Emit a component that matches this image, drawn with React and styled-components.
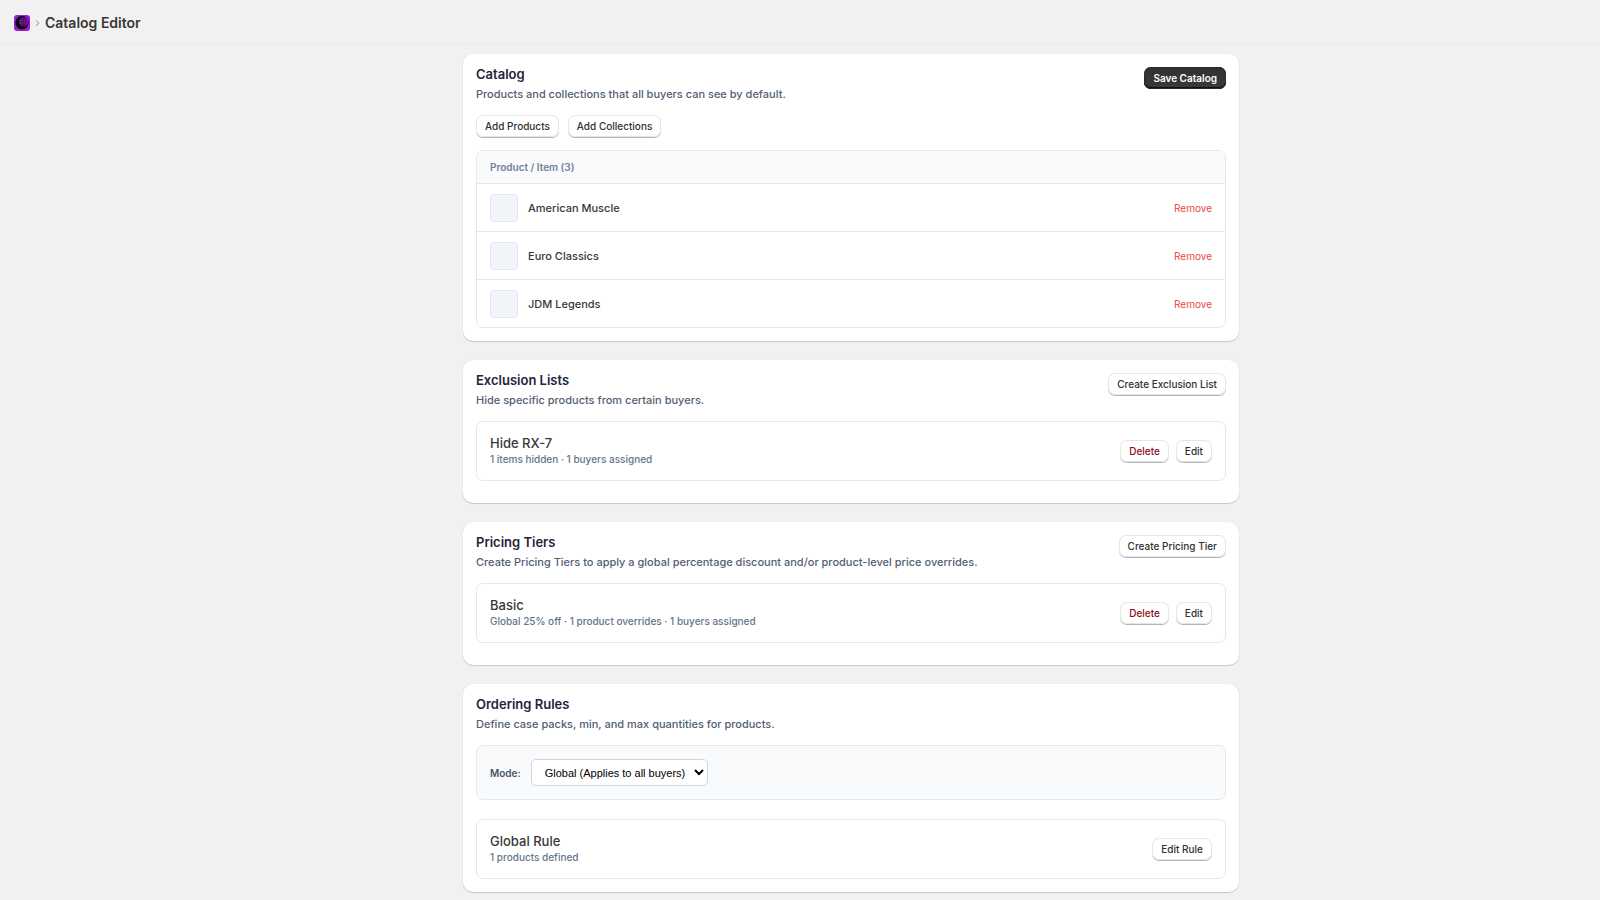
import React, { useState } from 'react'
import styled, { createGlobalStyle } from 'styled-components'

const GlobalStyle = createGlobalStyle`
  * {
    box-sizing: border-box;
  }
  body {
    margin: 0;
    background-color: #f1f1f1;
    color: #383838;
    font-family: Inter, "Liberation Sans", sans-serif;
    font-size: 11px;
    line-height: 16px;
  }
  h1, h2, h3, p {
    margin: 0;
  }
`

const TopBar = styled.header`
  display: flex;
  align-items: center;
  gap: 5px;
  height: 45px;
  padding: 2px 14px 0;
  border-bottom: 1px solid #ebebeb;
`

const PageTitle = styled.h1`
  font-size: 14px;
  line-height: 20px;
  font-weight: 600;
`

const Main = styled.main`
  padding: 9px 0 8px 102px;
`

const Column = styled.div`
  display: flex;
  flex-direction: column;
  gap: 19px;
  width: 100%;
  max-width: 776px;
  margin: 0 auto;
`

const Card = styled.section`
  display: flex;
  flex-direction: column;
  gap: 13px;
  padding: 13px;
  border-radius: 10px;
  background-color: #fff;
  box-shadow: 0 1px 1px rgba(0, 0, 0, 0.16), 0 0 1px rgba(0, 0, 0, 0.12);
`

const CardHeader = styled.div`
  display: flex;
  align-items: flex-start;
  justify-content: space-between;
`

const Heading = styled.div`
  display: flex;
  flex-direction: column;
  gap: 5px;
`

const CardTitle = styled.h2`
  color: #26233a;
  font-size: 13px;
  line-height: 14px;
  font-weight: 600;
`

const Description = styled.p`
  color: #526073;
  font-weight: 500;
`

const ButtonRow = styled.div`
  display: flex;
  gap: ${props => props.$gap || '7px'};
`

const Button = styled.button`
  height: 22px;
  padding: 0 9px;
  border: 0;
  border-radius: 7px;
  background-color: #fff;
  color: ${props => props.$critical ? '#8e0b21' : '#303030'};
  box-shadow: 0 1px 0 #b5b5b5, inset 0 0 0 1px #e6e6e6;
  font-family: inherit;
  font-size: 10px;
  line-height: 16px;
  font-weight: 500;
  white-space: nowrap;
  cursor: pointer;
`

const PrimaryButton = styled(Button)`
  background: linear-gradient(#303030, #3a3a3a);
  color: #fff;
  box-shadow: inset 0 0 0 1px #2a2a2a, inset 0 -2px 0 #111;
  font-weight: 600;
`

const TableFrame = styled.div`
  overflow: hidden;
  border: 1px solid #e2e8f0;
  border-radius: 7px;
`

const Table = styled.table`
  width: 100%;
  border-collapse: separate;
  border-spacing: 0;
`

const HeadCell = styled.th`
  height: 32px;
  padding: 0 13px;
  background-color: #f8fafc;
  color: #718096;
  font-size: 10px;
  font-weight: 600;
  text-align: left;
`

const Cell = styled.td`
  height: 48px;
  padding: 0 13px;
  border-top: 1px solid #e2e8f0;
  text-align: ${props => props.$end ? 'right' : 'left'};
`

const Product = styled.div`
  display: flex;
  align-items: center;
  gap: 10px;
  font-weight: 500;
`

const Thumbnail = styled.div`
  width: 28px;
  height: 28px;
  border: 1px solid #e2e8f0;
  border-radius: 4px;
  background-color: #f1f5f9;
`

const RemoveButton = styled.button`
  padding: 0;
  border: 0;
  background: none;
  color: #ef4444;
  font-family: inherit;
  font-size: 10px;
  line-height: 16px;
  cursor: pointer;
`

const ItemList = styled.div`
  display: flex;
  flex-direction: column;
  gap: 9px;
  padding-bottom: 9px;
`

const ItemBox = styled.div`
  display: flex;
  align-items: center;
  justify-content: space-between;
  padding: 13px;
  border: 1px solid #e2e8f0;
  border-radius: 7px;
`

const ItemTitle = styled.h3`
  font-size: 13px;
  line-height: 16px;
  font-weight: 500;
`

const ItemMeta = styled.p`
  color: #64748b;
  font-size: 10px;
  line-height: 16px;
  font-weight: 500;
`

const RuleBody = styled.div`
  display: flex;
  flex-direction: column;
  gap: 19px;
`

const ModeBar = styled.div`
  display: flex;
  align-items: center;
  gap: 10px;
  padding: 13px;
  border: 1px solid #e2e8f0;
  border-radius: 7px;
  background-color: #f8fafc;
`

const ModeLabel = styled.label`
  color: #475569;
  font-size: 10px;
  font-weight: 600;
`

const ModeSelect = styled.select`
  width: 177px;
  height: 27px;
  padding: 0 0 0 9px;
  border: 1px solid #cbd5e1;
  border-radius: 5px;
  background-color: #fff;
  color: #000;
  font-family: "Liberation Sans", Arial, sans-serif;
  font-size: 11px;
`

const PRODUCTS = ['American Muscle', 'Euro Classics', 'JDM Legends']

const Logo = () => (
  <svg width='16' height='16' viewBox='0 0 16 16' aria-hidden='true'>
    <defs>
      <linearGradient id='logoFill' x1='0' y1='0' x2='1' y2='1'>
        <stop offset='0' stopColor='#7a2fd0' />
        <stop offset='1' stopColor='#b012d6' />
      </linearGradient>
    </defs>
    <rect width='16' height='16' rx='3' fill='url(#logoFill)' />
    <circle cx='8' cy='7.7' r='6.7' fill='#08000f' />
    <circle cx='9.7' cy='6.7' r='4.5' fill='#9a1ecb' />
    <g fill='none' stroke='#1c0328' strokeWidth='0.6'>
      <ellipse cx='9.7' cy='6.7' rx='2.1' ry='4.5' />
      <path d='M9.7 2.2v9M5.2 6.7h9M5.9 4.3h7.6M5.9 9.1h7.6' />
    </g>
  </svg>
)

const Chevron = () => (
  <svg width='5' height='8' viewBox='0 0 5 8' aria-hidden='true'>
    <path d='M1 1.5L3.7 4.2L1 6.9' fill='none' stroke='#8a8a8a' strokeWidth='1' />
  </svg>
)

const SectionHeader = ({ title, description, action }) => (
  <CardHeader>
    <Heading>
      <CardTitle>{title}</CardTitle>
      <Description>{description}</Description>
    </Heading>
    {action}
  </CardHeader>
)

const Item = ({ title, meta, children }) => (
  <ItemBox>
    <div>
      <ItemTitle>{title}</ItemTitle>
      <ItemMeta>{meta}</ItemMeta>
    </div>
    <ButtonRow>{children}</ButtonRow>
  </ItemBox>
)

const App = () => {
  const [products, setProducts] = useState(PRODUCTS)
  const [mode, setMode] = useState('global')

  const remove = name => setProducts(products.filter(p => p !== name))

  return (
    <>
      <GlobalStyle />
      <TopBar>
        <Logo />
        <Chevron />
        <PageTitle>Catalog Editor</PageTitle>
      </TopBar>
      <Main>
        <Column>
          <Card>
            <SectionHeader
              title='Catalog'
              description='Products and collections that all buyers can see by default.'
              action={<PrimaryButton type='button'>Save Catalog</PrimaryButton>}
            />
            <ButtonRow $gap='9px'>
              <Button type='button'>Add Products</Button>
              <Button type='button'>Add Collections</Button>
            </ButtonRow>
            <TableFrame>
              <Table>
                <thead>
                  <tr>
                    <HeadCell colSpan={2}>Product / Item ({products.length})</HeadCell>
                  </tr>
                </thead>
                <tbody>
                  {products.map(name => (
                    <tr key={name}>
                      <Cell>
                        <Product>
                          <Thumbnail />
                          {name}
                        </Product>
                      </Cell>
                      <Cell $end>
                        <RemoveButton type='button' onClick={() => remove(name)}>
                          Remove
                        </RemoveButton>
                      </Cell>
                    </tr>
                  ))}
                </tbody>
              </Table>
            </TableFrame>
          </Card>

          <Card>
            <SectionHeader
              title='Exclusion Lists'
              description='Hide specific products from certain buyers.'
              action={<Button type='button'>Create Exclusion List</Button>}
            />
            <ItemList>
              <Item title='Hide RX-7' meta='1 items hidden · 1 buyers assigned'>
                <Button type='button' $critical>Delete</Button>
                <Button type='button'>Edit</Button>
              </Item>
            </ItemList>
          </Card>

          <Card>
            <SectionHeader
              title='Pricing Tiers'
              description='Create Pricing Tiers to apply a global percentage discount and/or product-level price overrides.'
              action={<Button type='button'>Create Pricing Tier</Button>}
            />
            <ItemList>
              <Item title='Basic' meta='Global 25% off · 1 product overrides · 1 buyers assigned'>
                <Button type='button' $critical>Delete</Button>
                <Button type='button'>Edit</Button>
              </Item>
            </ItemList>
          </Card>

          <Card>
            <SectionHeader
              title='Ordering Rules'
              description='Define case packs, min, and max quantities for products.'
            />
            <RuleBody>
              <ModeBar>
                <ModeLabel htmlFor='mode'>Mode:</ModeLabel>
                <ModeSelect id='mode' value={mode} onChange={e => setMode(e.target.value)}>
                  <option value='global'>Global (Applies to all buyers)</option>
                </ModeSelect>
              </ModeBar>
              <Item title='Global Rule' meta='1 products defined'>
                <Button type='button'>Edit Rule</Button>
              </Item>
            </RuleBody>
          </Card>
        </Column>
      </Main>
    </>
  )
}

export default App
